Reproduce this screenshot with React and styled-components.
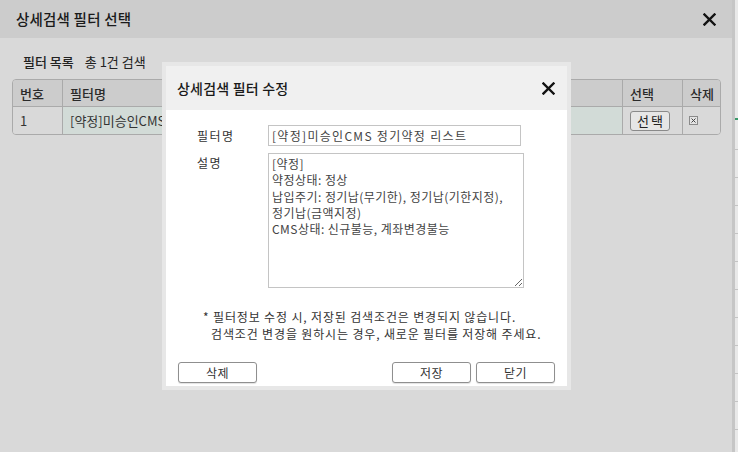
import React from "react";
import styled, { createGlobalStyle } from "styled-components";

const Global = createGlobalStyle`
  html, body { margin: 0; padding: 0; }
  body {
    font-family: "Noto Sans CJK KR", "Noto Sans", sans-serif;
    background: #ececec;
    color: #222;
  }
  * { box-sizing: border-box; }
`;

const Page = styled.div`
  display: flex;
  width: 738px;
  height: 452px;
  overflow: hidden;
`;

const Dialog = styled.div`
  position: relative;
  width: 735px;
  height: 452px;
  background: #d9d9d9;
  border-right: 3px solid #c6c6c6;
  display: flex;
  flex-direction: column;
`;

const DialogHeader = styled.div`
  height: 38px;
  flex: none;
  background: #cccccc;
  display: flex;
  align-items: center;
  justify-content: space-between;
  padding: 0 16px 0 16px;
`;

const Title = styled.h1`
  margin: 0;
  font-size: ${(p) => (p.$small ? "14px" : "14.5px")};
  font-weight: 500;
  color: #1a1a1a;
  line-height: 20px;
  letter-spacing: 0.2px;
`;

const CloseButton = styled.button`
  border: 0;
  background: none;
  padding: 0;
  width: 14px;
  height: 14px;
  display: flex;
  align-items: center;
  justify-content: center;
  cursor: pointer;
`;

const DialogBody = styled.div`
  padding: 15px 12px 0 12px;
`;

const ListHeader = styled.div`
  display: flex;
  gap: 11px;
  padding-left: 11px;
  margin-bottom: 9px;
  line-height: 17px;
  font-size: 13px;
`;

const ListLabel = styled.span`
  font-weight: ${(p) => (p.$strong ? 500 : 400)};
  color: #222;
`;

const TableWrap = styled.div`
  width: 709px;
  border: 1px solid #aaaaaa;
  border-radius: 4px;
  overflow: hidden;
`;

const Table = styled.table`
  width: 100%;
  border-collapse: separate;
  border-spacing: 0;
  table-layout: fixed;
  font-size: 13px;
`;

const Th = styled.th`
  height: 27px;
  background: #cccccc;
  text-align: left;
  font-weight: 500;
  color: #2a2a2a;
  padding: 0 0 0 7px;
  border-right: 1px solid #aaaaaa;
  border-bottom: 1px solid #aaaaaa;
  &:last-child { border-right: 0; }
`;

const Td = styled.td`
  height: 27px;
  background: ${(p) => (p.$hl ? "#d2dbd7" : "#d9d9d9")};
  padding: 0 0 0 7px;
  color: #333;
  border-right: 1px solid #aaaaaa;
  white-space: nowrap;
  overflow: hidden;
  &:last-child { border-right: 0; }
`;

const SmallButton = styled.button`
  width: 40px;
  height: 20px;
  padding: 0;
  border: 1px solid #8a8a8a;
  border-radius: 3px;
  background: #e6e6e6;
  font-family: inherit;
  font-size: 13px;
  letter-spacing: 2px;
  text-indent: 2px;
  color: #222;
  line-height: 17px;
  display: block;
`;

const CheckIcon = styled.svg`
  display: block;
  margin-left: -1px;
`;

const Modal = styled.div`
  position: absolute;
  left: 162px;
  top: 62px;
  width: 409px;
  border: 4px solid #e7e7e7;
  background: #ffffff;
`;

const ModalHeader = styled.div`
  height: 44px;
  background: #f0f0f0;
  display: flex;
  align-items: center;
  justify-content: space-between;
  padding: 0 12px 0 11px;
`;

const ModalBody = styled.div`
  padding: 15px 12px 3px 12px;
  font-size: 12px;
  color: #333;
`;

const FormRow = styled.div`
  display: grid;
  grid-template-columns: 90px auto;
  align-items: ${(p) => (p.$top ? "start" : "center")};
  margin-bottom: ${(p) => p.$gap || 0}px;
`;

const Label = styled.label`
  padding-left: 19px;
  line-height: 17px;
  letter-spacing: 1.5px;
  color: #333;
  padding-top: ${(p) => (p.$top ? "1px" : "0")};
`;

const TextInput = styled.input`
  width: 253px;
  height: 21px;
  border: 1px solid #c4c4c4;
  padding: 0 3px;
  font-family: inherit;
  font-size: 12px;
  letter-spacing: 1.3px;
  color: #444;
  outline: none;
`;

const TextArea = styled.textarea`
  width: 256px;
  height: 135px;
  border: 1px solid #c4c4c4;
  padding: 2px 3px;
  font-family: inherit;
  font-size: 12px;
  letter-spacing: 0.45px;
  line-height: 16.3px;
  color: #444;
  outline: none;
  display: block;
`;

const Note = styled.p`
  margin: 19.5px 0 0 0;
  padding-left: 25px;
  line-height: 17px;
  letter-spacing: 0.85px;
  color: #333;
`;

const NoteLine = styled.span`
  display: block;
  white-space: nowrap;
  padding-left: ${(p) => p.$indent || 0}px;
`;

const ButtonBar = styled.div`
  display: flex;
  gap: 5px;
  margin-top: 20.5px;
`;

const Spacer = styled.div`
  flex: 1;
`;

const Button = styled.button`
  width: 79px;
  height: 21px;
  padding: 0;
  border: 1px solid #8f8f8f;
  border-radius: 3px;
  background: #ffffff;
  box-shadow: 0 1px 1px rgba(0, 0, 0, 0.12);
  font-family: inherit;
  font-size: 12px;
  letter-spacing: 0.5px;
  color: #333;
  line-height: 17px;
`;

const Strip = styled.div`
  flex: 1;
  background: #e9e9e9;
  padding-top: 118px;
`;

const GreenMark = styled.div`
  height: 2px;
  background: #3a9a6a;
  margin-bottom: 29px;
`;

const StripRow = styled.div`
  height: 28px;
  border-top: 1px solid #c4c4c4;
`;

const XIcon = ({ size = 13 }) => (
  <svg width={size} height={size} viewBox="0 0 13 13">
    <path d="M1.5 1.5 L11.5 11.5 M11.5 1.5 L1.5 11.5" stroke="#111" strokeWidth="2.4" strokeLinecap="square" />
  </svg>
);

const description = `[약정]
약정상태: 정상
납입주기: 정기납(무기한), 정기납(기한지정),
정기납(금액지정)
CMS상태: 신규불능, 계좌변경불능`;

export default function App() {
  return (
    <>
      <Global />
      <Page>
        <Dialog>
          <DialogHeader>
            <Title>상세검색 필터 선택</Title>
            <CloseButton aria-label="닫기">
              <XIcon size={13} />
            </CloseButton>
          </DialogHeader>
          <DialogBody>
            <ListHeader>
              <ListLabel $strong>필터 목록</ListLabel>
              <ListLabel>총 1건 검색</ListLabel>
            </ListHeader>
            <TableWrap>
              <Table>
                <colgroup>
                  <col style={{ width: 50 }} />
                  <col style={{ width: 560 }} />
                  <col style={{ width: 60 }} />
                  <col style={{ width: 39 }} />
                </colgroup>
                <thead>
                  <tr>
                    <Th>번호</Th>
                    <Th>필터명</Th>
                    <Th>선택</Th>
                    <Th>삭제</Th>
                  </tr>
                </thead>
                <tbody>
                  <tr>
                    <Td>1</Td>
                    <Td $hl>[약정]미승인CMS 정기약정 리스트</Td>
                    <Td>
                      <SmallButton>선택</SmallButton>
                    </Td>
                    <Td>
                      <CheckIcon width="9" height="9" viewBox="0 0 9 9">
                        <rect x="0.5" y="0.5" width="8" height="8" fill="#e4e4e4" stroke="#8a8a8a" />
                        <path d="M2.5 2.5 L6.5 6.5 M6.5 2.5 L2.5 6.5" stroke="#444" strokeWidth="1" />
                      </CheckIcon>
                    </Td>
                  </tr>
                </tbody>
              </Table>
            </TableWrap>
          </DialogBody>

          <Modal>
            <ModalHeader>
              <Title $small>상세검색 필터 수정</Title>
              <CloseButton aria-label="닫기">
                <XIcon size={13} />
              </CloseButton>
            </ModalHeader>
            <ModalBody>
              <FormRow $gap={7}>
                <Label>필터명</Label>
                <TextInput defaultValue="[약정]미승인CMS 정기약정 리스트" />
              </FormRow>
              <FormRow $top>
                <Label $top>설명</Label>
                <TextArea defaultValue={description} />
              </FormRow>
              <Note>
                <NoteLine>* 필터정보 수정 시, 저장된 검색조건은 변경되지 않습니다.</NoteLine>
                <NoteLine $indent={8}>검색조건 변경을 원하시는 경우, 새로운 필터를 저장해 주세요.</NoteLine>
              </Note>
              <ButtonBar>
                <Button>삭제</Button>
                <Spacer />
                <Button>저장</Button>
                <Button>닫기</Button>
              </ButtonBar>
            </ModalBody>
          </Modal>
        </Dialog>
        <Strip>
          <GreenMark />
          {Array.from({ length: 11 }).map((_, i) => (
            <StripRow key={i} />
          ))}
        </Strip>
      </Page>
    </>
  );
}
